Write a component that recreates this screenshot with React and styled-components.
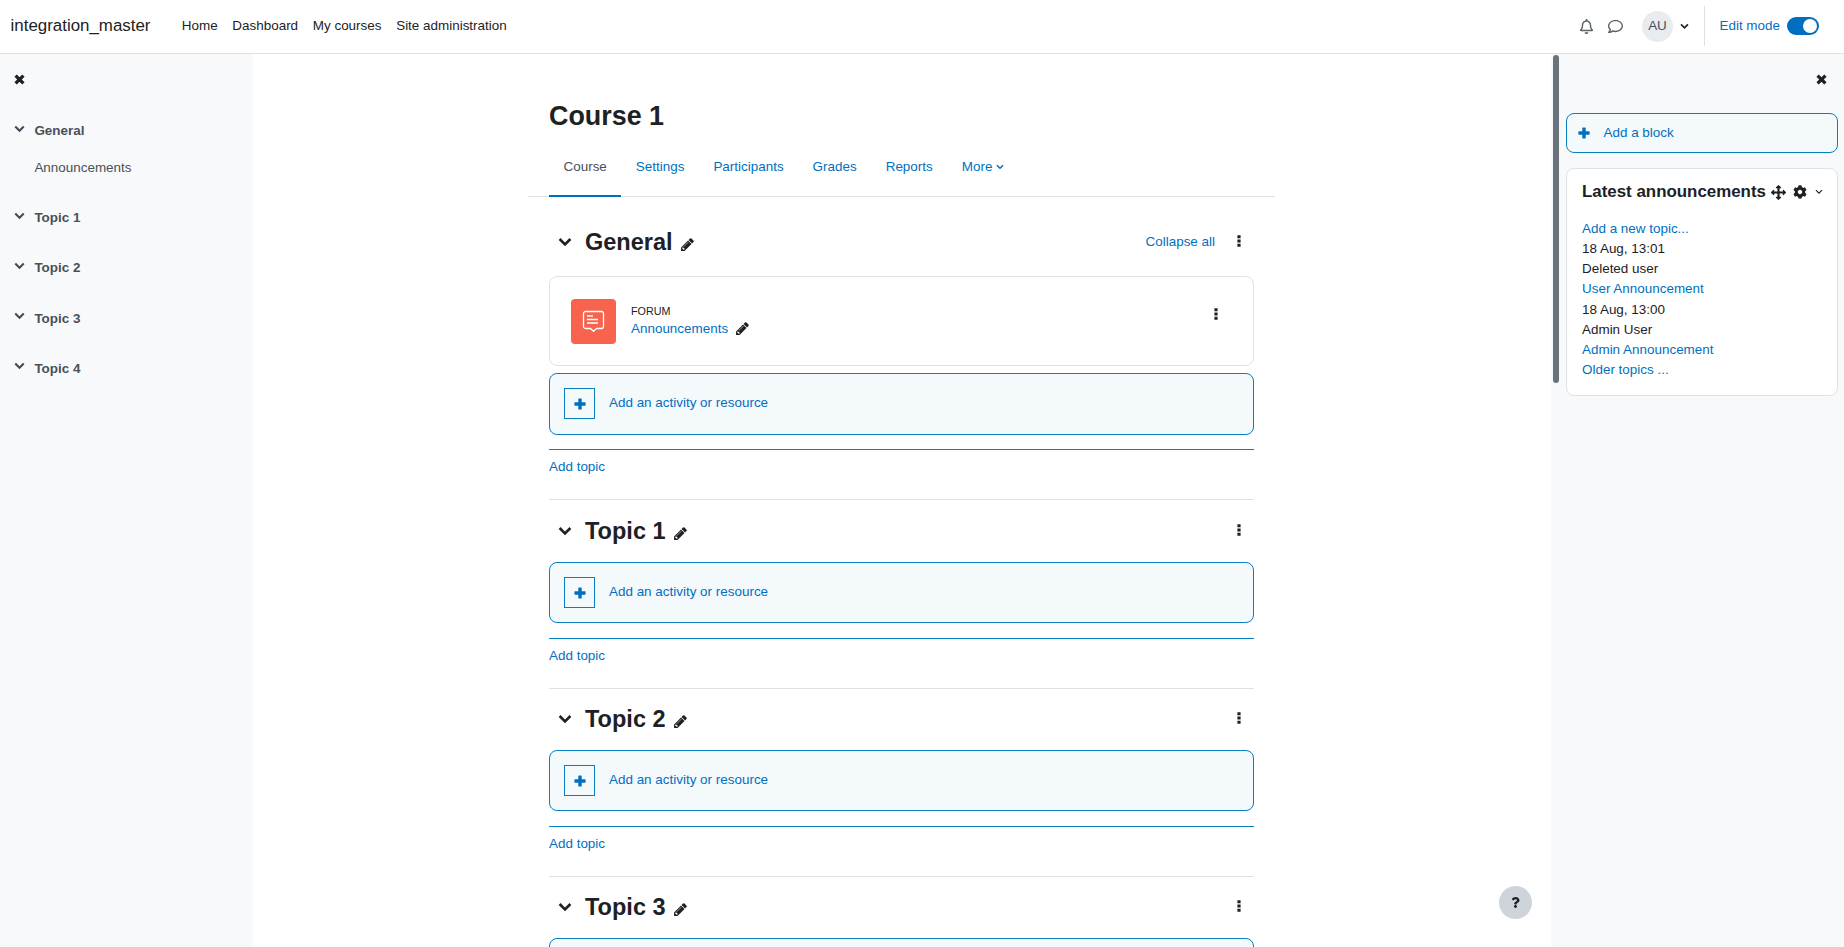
import React from "react";
import styled, { createGlobalStyle } from "styled-components";
import { FaCog, FaRegBell, FaRegComment, FaQuestion } from "react-icons/fa";

const LINK = "#006fbf";
const LINE = "#0880c0";
const INK = "#1d2125";

const Global = createGlobalStyle`
  html, body { margin: 0; padding: 0; height: 100%; overflow: hidden; background: #fff; }
  body { font-family: "Liberation Sans", Arial, sans-serif; font-size: 13.44px; line-height: 1.5; color: ${INK}; }
  * { box-sizing: border-box; }
`;

const IconSvg = styled.svg`
  display: block;
  flex: none;
  width: ${(p) => p.$w}px;
  height: ${(p) => p.$h || p.$w}px;
  color: ${(p) => p.$color || "currentColor"};
`;

const TimesIcon = () => (
  <IconSvg $w={11} viewBox="0 0 11 11" $color={INK}>
    <path d="M1.6 1.6l7.8 7.8M9.4 1.6l-7.8 7.8" stroke="currentColor" strokeWidth="3.3" strokeLinecap="butt" fill="none" />
  </IconSvg>
);
const ChevronIcon = ({ w, color, weight = 2.6 }) => (
  <IconSvg $w={w} $h={w * 0.72} viewBox="0 0 14 10" $color={color}>
    <path d="M1.6 2l5.4 5.4L12.4 2" stroke="currentColor" strokeWidth={weight} fill="none" />
  </IconSvg>
);
const PlusIcon = ({ w = 12 }) => (
  <IconSvg $w={w} viewBox="0 0 12 12" $color={LINK}>
    <path d="M4.3 1a.6.6 0 0 1 .6-.6h2.2a.6.6 0 0 1 .6.6v3.3H11a.6.6 0 0 1 .6.6v2.2a.6.6 0 0 1-.6.6H7.7V11a.6.6 0 0 1-.6.6H4.9a.6.6 0 0 1-.6-.6V7.7H1a.6.6 0 0 1-.6-.6V4.9A.6.6 0 0 1 1 4.3h3.3z" fill="currentColor" />
  </IconSvg>
);
const PencilIcon = ({ top = 0 }) => (
  <PencilWrap $top={top}>
    <IconSvg $w={15} viewBox="0 0 1792 1792" $color={INK}>
      <path d="M491 1536l91-91-235-235-91 91v107h128v128h107zm523-928q0-22-22-22-10 0-17 7l-542 542q-7 7-7 17 0 22 22 22 10 0 17-7l542-542q7-7 7-17zm-54-192l416 416-832 832h-416v-416zm683 96q0 53-37 90l-166 166-416-416 166-165q36-38 90-38 53 0 91 38l235 234q37 39 37 91z" fill="currentColor" />
    </IconSvg>
  </PencilWrap>
);
const MoveIcon = () => (
  <IconSvg $w={15} viewBox="0 0 1792 1792" $color={INK}>
    <path d="M1792 896q0 26-19 45l-256 256q-19 19-45 19t-45-19-19-45v-128h-384v384h128q26 0 45 19t19 45-19 45l-256 256q-19 19-45 19t-45-19l-256-256q-19-19-19-45t19-45 45-19h128v-384h-384v128q0 26-19 45t-45 19-45-19l-256-256q-19-19-19-45t19-45l256-256q19-19 45-19t45 19 19 45v128h384v-384h-128q-26 0-45-19t-19-45 19-45l256-256q19-19 45-19t45 19l256 256q19 19 19 45t-19 45-45 19h-128v384h384v-128q0-26 19-45t45-19 45 19l256 256q19 19 19 45z" fill="currentColor" />
  </IconSvg>
);
const DotsIcon = () => (
  <IconSvg $w={4} $h={12} viewBox="0 0 4 12" $color={INK}>
    <path d="M.4.3h3.2v3H.4zM.4 4.5h3.2v3H.4zM.4 8.7h3.2v3H.4z" fill="currentColor" />
  </IconSvg>
);

const Page = styled.div`
  height: 947px;
  display: flex;
  flex-direction: column;
  overflow: hidden;
`;
const Navbar = styled.header`
  height: 54px;
  flex: none;
  display: flex;
  align-items: center;
  padding: 0 25px 1px 10.6px;
  border-bottom: 1px solid #dee2e6;
`;
const Brand = styled.div`
  font-size: 16.9px;
  margin-right: 31.3px;
`;
const NavLinks = styled.nav`
  display: flex;
  gap: 14.7px;
`;
const NavLink = styled.a`
  color: ${INK};
`;
const NavRight = styled.div`
  margin-left: auto;
  display: flex;
  align-items: center;
`;
const NavIcon = styled.span`
  display: flex;
  color: #5a6268;
  font-size: 15px;
  margin-right: ${(p) => p.$mr}px;
`;
const Avatar = styled.div`
  width: 31px;
  height: 31px;
  border-radius: 50%;
  background: #e9ecef;
  color: #495057;
  display: flex;
  align-items: center;
  justify-content: center;
  margin-right: 7px;
`;
const Divider = styled.div`
  width: 1px;
  height: 40px;
  background: #dee2e6;
  margin: 0 14px 0 15.5px;
`;
const EditLabel = styled.span`
  color: ${LINK};
  margin-right: 7px;
`;
const Toggle = styled.div`
  width: 32px;
  height: 18px;
  border-radius: 9px;
  background: ${LINK};
  position: relative;
  &::after {
    content: "";
    position: absolute;
    top: 2px;
    right: 2px;
    width: 14px;
    height: 14px;
    border-radius: 50%;
    background: #fff;
  }
`;
const Body = styled.div`
  flex: 1;
  min-height: 0;
  display: flex;
  position: relative;
`;
const LeftDrawer = styled.aside`
  width: 253px;
  flex: none;
  background: #f8f9fa;
  padding: 20px 14px 18px;
`;
const Index = styled.div`
  margin-top: 36px;
  display: flex;
  flex-direction: column;
  gap: 30px;
`;
const IndexHead = styled.div`
  display: flex;
  align-items: center;
  font-weight: 700;
  color: #495057;
`;
const IndexChevronWrap = styled.span`
  display: flex;
  width: 12px;
  margin-right: 8.4px;
  margin-top: -5px;
  flex: none;
`;
const IndexItem = styled.div`
  margin: 17px 0 0 20.4px;
  color: #495057;
`;
const Main = styled.main`
  flex: 1;
  min-width: 0;
  overflow: hidden;
  padding: 46px 0 0 275px;
`;
const Column = styled.div`
  width: 747px;
`;
const Title = styled.h1`
  margin: 0 0 4px 21px;
  font-size: 26.88px;
  line-height: 32px;
  font-weight: 700;
`;
const Tabs = styled.div`
  display: flex;
  padding-left: 21px;
  border-bottom: 1px solid #dee2e6;
  height: 61px;
`;
const Tab = styled.a`
  display: flex;
  align-items: center;
  gap: 4px;
  padding: 3px 14.5px 0;
  height: 61px;
  color: ${(p) => (p.$active ? "#495057" : LINK)};
  border-bottom: 2px solid ${(p) => (p.$active ? LINK : "transparent")};
`;
const Sections = styled.div`
  padding: 29px 21px 0;
`;
const Section = styled.section`
  ${(p) => (p.$first ? "" : "border-top: 1px solid #dee2e6; padding-top: 14.5px;")}
`;
const SectionHead = styled.div`
  height: 32px;
  display: flex;
  align-items: center;
  padding-left: 9px;
  margin-bottom: ${(p) => (p.$first ? 18 : 15)}px;
`;
const SectionTitle = styled.h2`
  margin: 0 0 0 13px;
  font-size: 23.52px;
  line-height: 32px;
  font-weight: 700;
`;
const PencilWrap = styled.span`
  display: flex;
  margin-left: 7px;
  position: relative;
  top: ${(p) => p.$top}px;
`;
const SectionActions = styled.div`
  margin-left: auto;
  display: flex;
  align-items: center;
  padding: 0 13.5px 2px 0;
`;
const Collapse = styled.a`
  color: ${LINK};
  margin-right: 21.5px;
  position: relative;
  top: 1.5px;
`;
const Card = styled.div`
  height: 90px;
  border: 1px solid #dee2e6;
  border-radius: 8px;
  display: flex;
  align-items: center;
  padding: 0 35.5px 0 21px;
  margin-bottom: 7.4px;
`;
const ForumIcon = styled.div`
  width: 45px;
  height: 45px;
  border-radius: 4px;
  background: #f7634d;
  display: flex;
  align-items: center;
  justify-content: center;
  flex: none;
  margin-right: 15px;
`;
const ActivityInfo = styled.div`
  display: flex;
  flex-direction: column;
  margin-top: -2px;
`;
const ActivityType = styled.div`
  font-size: 10.75px;
  line-height: 16px;
  color: ${INK};
`;
const ActivityName = styled.div`
  display: flex;
  align-items: center;
  line-height: 19px;
  color: ${LINK};
`;
const CardDots = styled.span`
  display: flex;
  margin: -14px 0 0 auto;
`;
const AddBox = styled.div`
  height: 61.16px;
  border: 1px solid ${LINE};
  border-radius: 8px;
  background: #f4f9fc;
  display: flex;
  align-items: center;
  padding: 0 0 1px 14px;
  color: ${LINK};
`;
const PlusBox = styled.div`
  width: 31px;
  height: 31px;
  border: 1px solid ${LINE};
  display: flex;
  align-items: center;
  justify-content: center;
  margin: 1px 14px 0 0;
`;
const AddTopic = styled.div`
  margin-top: 14.84px;
  border-top: 1px solid ${LINE};
  padding: 7px 0 ${(p) => (p.$first ? 21.9 : 21.5)}px;
  color: ${LINK};
`;
const RightDrawer = styled.aside`
  width: 293px;
  flex: none;
  background: #f8f9fa;
  padding: 20px 6px 0 15px;
`;
const RightClose = styled.div`
  display: flex;
  justify-content: flex-end;
  padding-right: 11px;
  height: 39px;
`;
const AddBlock = styled.div`
  height: 40px;
  border: 1px solid ${LINE};
  border-radius: 8px;
  background: #f4f9fc;
  display: flex;
  align-items: center;
  padding-left: 11px;
  gap: 13.5px;
  color: ${LINK};
  margin-bottom: 15px;
`;
const Block = styled.div`
  background: #fff;
  border: 1px solid #dee2e6;
  border-radius: 8px;
  padding: 10px 15px 14.7px;
`;
const BlockHead = styled.div`
  height: 26px;
  display: flex;
  align-items: center;
  margin-bottom: 14px;
`;
const BlockTitle = styled.h3`
  margin: 0;
  font-size: 16.9px;
  font-weight: 700;
  line-height: 26px;
  white-space: nowrap;
`;
const BlockTool = styled.span`
  display: flex;
  font-size: 14px;
  color: ${INK};
  margin-left: ${(p) => p.$ml}px;
`;
const BlockLine = styled.div`
  color: ${(p) => (p.$link ? LINK : INK)};
`;
const ScrollThumb = styled.div`
  position: absolute;
  left: 1553px;
  top: 1px;
  width: 6px;
  height: 328px;
  border-radius: 3px;
  background: #6a737b;
`;
const Help = styled.div`
  position: absolute;
  left: 1499px;
  top: 832px;
  width: 33px;
  height: 33px;
  border-radius: 50%;
  background: #ced4da;
  display: flex;
  align-items: center;
  justify-content: center;
  font-size: 11px;
  color: ${INK};
`;

const ForumGlyph = () => (
  <svg width="23" height="23" viewBox="0 0 23 23" fill="none" stroke="#fff" strokeWidth="1.3">
    <path d="M3.5 1.5h16a2 2 0 0 1 2 2v13a2 2 0 0 1-2 2h-5l-3 2.7-3-2.7h-5a2 2 0 0 1-2-2v-13a2 2 0 0 1 2-2z" strokeLinejoin="round" />
    <path d="M5 6h6M5 9.5h11M5 13h11" />
  </svg>
);

const AddActivity = () => (
  <AddBox>
    <PlusBox><PlusIcon /></PlusBox>
    Add an activity or resource
  </AddBox>
);

/* The last topic runs past the bottom of the window: only the top edge of its box shows. */
const Topic = ({ name, cutByWindow }) => (
  <Section>
    <SectionHead>
      <ChevronIcon w={14} />
      <SectionTitle>{name}</SectionTitle>
      <PencilIcon top={2.5} />
      <SectionActions><DotsIcon /></SectionActions>
    </SectionHead>
    {cutByWindow ? <AddBox /> : <AddActivity />}
    {!cutByWindow && <AddTopic>Add topic</AddTopic>}
  </Section>
);

const blockLines = [
  ["Add a new topic...", true],
  ["18 Aug, 13:01", false],
  ["Deleted user", false],
  ["User Announcement", true],
  ["18 Aug, 13:00", false],
  ["Admin User", false],
  ["Admin Announcement", true],
  ["Older topics ...", true],
];

export default function App() {
  return (
    <Page>
      <Global />
      <Navbar>
        <Brand>integration_master</Brand>
        <NavLinks>
          {["Home", "Dashboard", "My courses", "Site administration"].map((t) => (
            <NavLink key={t}>{t}</NavLink>
          ))}
        </NavLinks>
        <NavRight>
          <NavIcon $mr={14}><FaRegBell /></NavIcon>
          <NavIcon $mr={18.5}><FaRegComment /></NavIcon>
          <Avatar>AU</Avatar>
          <ChevronIcon w={9} color={INK} />
          <Divider />
          <EditLabel>Edit mode</EditLabel>
          <Toggle />
        </NavRight>
      </Navbar>
      <Body>
        <LeftDrawer>
          <TimesIcon />
          <Index>
            <div>
              <IndexHead>
                <IndexChevronWrap><ChevronIcon w={11} color="#3f4b57" /></IndexChevronWrap>
                General
              </IndexHead>
              <IndexItem>Announcements</IndexItem>
            </div>
            {["Topic 1", "Topic 2", "Topic 3", "Topic 4"].map((t) => (
              <IndexHead key={t}>
                <IndexChevronWrap><ChevronIcon w={11} color="#3f4b57" /></IndexChevronWrap>
                {t}
              </IndexHead>
            ))}
          </Index>
        </LeftDrawer>
        <Main>
          <Column>
            <Title>Course 1</Title>
            <Tabs>
              <Tab $active>Course</Tab>
              <Tab>Settings</Tab>
              <Tab>Participants</Tab>
              <Tab>Grades</Tab>
              <Tab>Reports</Tab>
              <Tab>More <ChevronIcon w={8} color={LINK} /></Tab>
            </Tabs>
            <Sections>
              <Section $first>
                <SectionHead $first>
                  <ChevronIcon w={14} />
                  <SectionTitle>General</SectionTitle>
                  <PencilIcon top={2.5} />
                  <SectionActions>
                    <Collapse>Collapse all</Collapse>
                    <DotsIcon />
                  </SectionActions>
                </SectionHead>
                <Card>
                  <ForumIcon><ForumGlyph /></ForumIcon>
                  <ActivityInfo>
                    <ActivityType>FORUM</ActivityType>
                    <ActivityName>Announcements<PencilIcon /></ActivityName>
                  </ActivityInfo>
                  <CardDots><DotsIcon /></CardDots>
                </Card>
                <AddActivity />
                <AddTopic $first>Add topic</AddTopic>
              </Section>
              <Topic name="Topic 1" />
              <Topic name="Topic 2" />
              <Topic name="Topic 3" cutByWindow />
            </Sections>
          </Column>
        </Main>
        <RightDrawer>
          <RightClose><TimesIcon /></RightClose>
          <AddBlock><PlusIcon />Add a block</AddBlock>
          <Block>
            <BlockHead>
              <BlockTitle>Latest announcements</BlockTitle>
              <BlockTool $ml={5}><MoveIcon /></BlockTool>
              <BlockTool $ml={7}><FaCog /></BlockTool>
              <BlockTool $ml={8}><ChevronIcon w={8} color={INK} weight={2} /></BlockTool>
            </BlockHead>
            {blockLines.map(([t, link]) => (
              <BlockLine key={t} $link={link}>{t}</BlockLine>
            ))}
          </Block>
        </RightDrawer>
        <ScrollThumb />
        <Help><FaQuestion /></Help>
      </Body>
    </Page>
  );
}
